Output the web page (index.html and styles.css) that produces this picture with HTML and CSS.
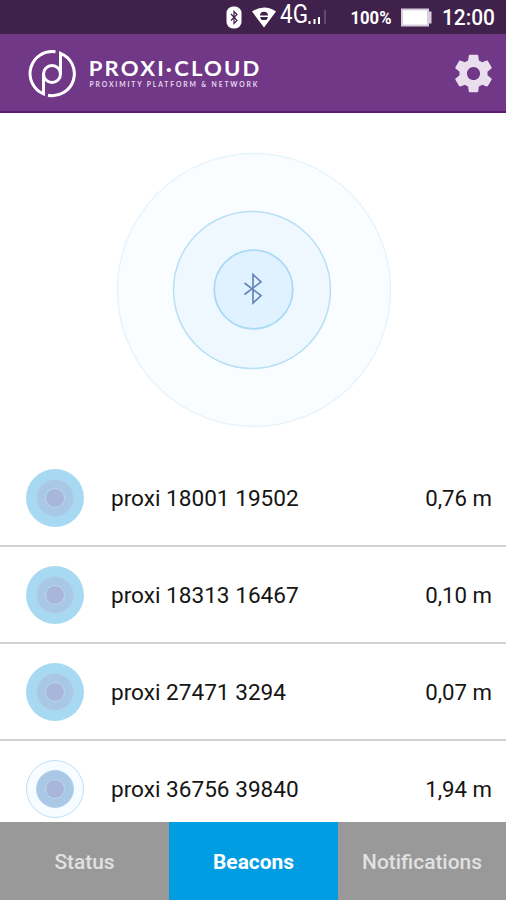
FILE: index.html
```html
<!DOCTYPE html>
<html lang="en">
<head>
<meta charset="utf-8">
<title>Proxi.Cloud</title>
<link rel="stylesheet" href="styles.css">
</head>
<body>
<div class="app">
  <div class="statusbar">
    <svg class="status-icons" width="281" height="34" viewBox="0 0 281 34">
      <rect x="1.5" y="6.500" width="15" height="22" rx="6.500" fill="#fff"/>
      <path d="M6 14l6 6.500-3 3V11.500l3 3-6 6" fill="none" stroke="#3f214c" stroke-width="1.200"/>
      <path d="M27 11.500Q39.500 3.500 51 11.500L39 27.500Z" fill="#fff"/>
      <path d="M35 15.500a4 3.800 0 0 1 8 0zM35 17h8l-1.500 3h-5z" fill="#3f214c"/>
      <text class="network" x="55" y="23" textLength="28" lengthAdjust="spacingAndGlyphs">4G</text>
      <path d="M84.500 24v-3M89.500 24v-5M94 24v-7" stroke="#fff" stroke-width="2"/>
      <path d="M100 24V10" stroke="#66486f" stroke-width="2"/>
      <text class="percent" x="125.500" y="23.500" textLength="41" lengthAdjust="spacingAndGlyphs">100%</text>
      <path d="M176 8.500h28v3h2.500v12H204v3h-28z" fill="#d9cddd"/>
      <rect x="178" y="10.500" width="24" height="14" fill="#fff"/>
      <text class="clock" x="217" y="25" textLength="53" lengthAdjust="spacingAndGlyphs">12:00</text>
    </svg>
  </div>
  <header class="header">
    <svg class="logo" width="236" height="50" viewBox="26 48 236 50">
      <g fill="none" stroke="#fff" stroke-width="3">
        <path d="M55.500 51.800A22 22 0 0 0 43.500 93.800V74"/>
        <path d="M48 95.300A22 22 0 0 0 60.500 53.300V74"/>
        <circle cx="52" cy="74" r="8.500"/>
      </g>
      <text class="brand" x="84.500" y="76" textLength="162.500" transform="scale(1.05 1)">PROXI·CLOUD</text>
      <text class="tagline" x="89.500" y="86.600" textLength="168">PROXIMITY PLATFORM &amp; NETWORK</text>
    </svg>
    <svg class="gear" width="45" height="45" viewBox="0 0 24 24"><path fill="#e9deed" d="M19.430 12.980c.04-.32.07-.64.07-.98s-.03-.66-.07-.98l2.110-1.650c.19-.15.24-.42.12-.64l-2-3.460c-.12-.22-.39-.3-.61-.22l-2.490 1c-.52-.4-1.080-.73-1.690-.98l-.38-2.650C14.460 2.180 14.250 2 14 2h-4c-.25 0-.46.18-.49.42l-.38 2.650c-.61.25-1.170.59-1.690.98l-2.490-1c-.23-.09-.49 0-.61.22l-2 3.460c-.13.22-.07.49.12.64l2.110 1.650c-.04.32-.07.65-.07.98s.03.66.07.98l-2.110 1.650c-.19.15-.24.42-.12.64l2 3.460c.12.22.39.3.61.22l2.490-1c.52.4 1.080.73 1.690.98l.38 2.650c.03.24.24.42.49.42h4c.25 0 .46-.18.49-.42l.38-2.650c.61-.25 1.170-.59 1.690-.98l2.490 1c.23.09.49 0 .61-.22l2-3.460c.12-.22.07-.49-.12-.64l-2.110-1.650zM12 15.500c-1.930 0-3.500-1.570-3.500-3.500s1.570-3.500 3.500-3.500 3.500 1.570 3.500 3.500-1.570 3.500-3.500 3.500z"/></svg>
  </header>
  <main class="content">
    <section class="radar">
      <svg width="276" height="276" viewBox="0 0 276 276">
        <circle cx="138" cy="138" r="136.500" fill="#fafdff" stroke="#e6f4fb" stroke-width="1.500"/>
        <circle cx="136" cy="138" r="78.500" fill="#eff8ff" stroke="#b7e0f5" stroke-width="1.500"/>
        <circle cx="137.500" cy="137.500" r="39.300" fill="#e0f1ff" stroke="#a9daf4" stroke-width="1.700"/>
        <path d="M128.500 131l16.500 12.500-8 7.500v-28.500l8 7.500-16.500 12.500" fill="none" stroke="#6686b8" stroke-width="1.700"/>
      </svg>
    </section>
    <ul class="beacons">
      <li class="beacon"><span class="ring near"><i class="mid"><b class="core"></b></i></span><span class="name">proxi 18001 19502</span><span class="distance">0,76 m</span></li>
      <li class="beacon"><span class="ring near"><i class="mid"><b class="core"></b></i></span><span class="name">proxi 18313 16467</span><span class="distance">0,10 m</span></li>
      <li class="beacon"><span class="ring near"><i class="mid"><b class="core"></b></i></span><span class="name">proxi 27471 3294</span><span class="distance">0,07 m</span></li>
      <li class="beacon"><span class="ring far"><i class="mid"><b class="core"></b></i></span><span class="name">proxi 36756 39840</span><span class="distance">1,94 m</span></li>
    </ul>
  </main>
  <nav class="tabs">
    <a class="tab">Status</a>
    <a class="tab active">Beacons</a>
    <a class="tab">Notifications</a>
  </nav>
</div>
</body>
</html>
```
FILE: styles.css
```css
* { box-sizing: border-box; }
body { margin: 0; background: #fff; font-family: Roboto, "Liberation Sans", sans-serif; }
.app { width: 506px; height: 900px; display: flex; flex-direction: column; overflow: hidden; }
.statusbar { height: 34px; flex: none; background: #3f214c; display: flex; justify-content: flex-end; }
.status-icons text { fill: #fff; font-family: Roboto, sans-serif; }
.status-icons .network { font-size: 25px; }
.status-icons .percent { font-size: 18.5px; font-weight: 700; }
.status-icons .clock { font-size: 21.5px; font-weight: 500; }
.header { height: 79px; flex: none; background: #723888; border-bottom: 2px solid #5b1b74; display: flex; align-items: center; justify-content: space-between; padding: 0 10.5px 0 26px; }
.gear { display: block; margin-top: 2px; }
.logo { display: block; }
.logo text { fill: #fff; font-family: Lato, sans-serif; }
.logo .brand { font-size: 21px; font-weight: 700; }
.logo .tagline { font-size: 6.8px; font-weight: 700; fill: #e6d7eb; }
.content { flex: 1; min-height: 0; overflow: hidden; }
.radar { height: 337px; padding: 39px 0 0 116px; }
.radar svg { display: block; }
.beacons { list-style: none; margin: 0; padding: 0; }
.beacon { height: 97px; border-bottom: 2px solid #d2d2d2; display: flex; align-items: center; padding: 0 14px 0 26px; font-size: 22.6px; color: #151515; }
.ring, .mid, .core { display: grid; place-items: center; border-radius: 50%; }
.ring { width: 58px; height: 58px; flex: none; }
.near { background: #a8d9f2; }
.far { background: #f6fcff; border: 1.5px solid #bfe0f8; }
.mid { width: 38px; height: 38px; background: #a9c8e6; border: 1px solid #b1d3ed; }
.core { width: 20px; height: 20px; background: #a7b6da; border: 1.5px solid #b9d8f0; }
.name { margin-left: 27px; padding-top: 2px; flex: 1; }
.distance { white-space: nowrap; font-size: 22.2px; }
.tabs { height: 78px; flex: none; display: grid; grid-template-columns: 169px 169px 168px; }
.tab { display: flex; align-items: center; justify-content: center; background: #999; color: #e1e1e1; font-size: 20.9px; font-weight: 500; padding-top: 2px; }
.active { background: #009de3; color: #fff; font-weight: 700; }
```
